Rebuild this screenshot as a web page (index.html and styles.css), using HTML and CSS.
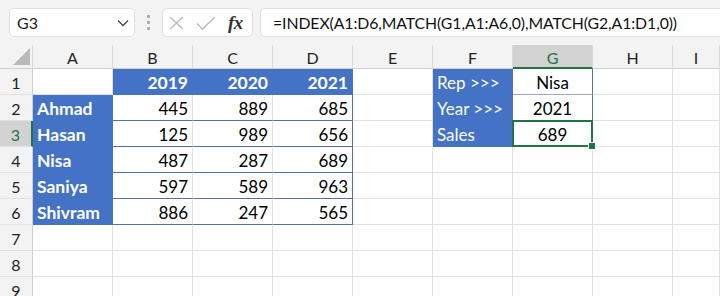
FILE: index.html
```html
<!DOCTYPE html>
<html>
<head>
<meta charset="utf-8">
<link rel="stylesheet" href="styles.css">
</head>
<body>
<div class="toolbar">
  <div class="namebox">
    <span class="ref">G3</span>
    <svg class="chev" width="12" height="8" viewBox="0 0 12 8"><path d="M1 1.5 L6 6.5 L11 1.5" fill="none" stroke="#444" stroke-width="1.3"/></svg>
  </div>
  <div class="dots"><i></i><i></i><i></i></div>
  <div class="fxbox">
    <svg width="18" height="14" viewBox="0 0 18 14"><path d="M2 1 L15 13 M15 1 L2 13" fill="none" stroke="#b9b9b9" stroke-width="1.3"/></svg>
    <svg width="20" height="14" viewBox="0 0 20 14"><path d="M1 7.5 L6.5 13 L19 1" fill="none" stroke="#b9b9b9" stroke-width="1.3"/></svg>
    <span class="fx">fx</span>
  </div>
  <div class="formula">=INDEX(A1:D6,MATCH(G1,A1:A6,0),MATCH(G2,A1:D1,0))</div>
</div>
<div class="sheet">
  <div class="corner"><span class="tri"></span></div>
  <div class="hdr">A</div><div class="hdr">B</div><div class="hdr">C</div><div class="hdr">D</div><div class="hdr">E</div><div class="hdr">F</div><div class="hdr hsel">G</div><div class="hdr">H</div><div class="hdr">I</div>

  <div class="rh">1</div>
  <div class="c"></div><div class="c blue bold num">2019</div><div class="c blue bold num">2020</div><div class="c blue bold num">2021</div><div class="c"></div><div class="c blue">Rep &gt;&gt;&gt;</div><div class="c ctr gb">Nisa</div><div class="c"></div><div class="c"></div>

  <div class="rh">2</div>
  <div class="c blue bold">Ahmad</div><div class="c num tb">445</div><div class="c num tb">889</div><div class="c num tb tr">685</div><div class="c"></div><div class="c blue">Year &gt;&gt;&gt;</div><div class="c ctr gb">2021</div><div class="c"></div><div class="c"></div>

  <div class="rh rsel">3</div>
  <div class="c blue bold">Hasan</div><div class="c num tb">125</div><div class="c num tb">989</div><div class="c num tb tr">656</div><div class="c"></div><div class="c blue">Sales</div><div class="c ctr sel">689</div><div class="c"></div><div class="c"></div>

  <div class="rh">4</div>
  <div class="c blue bold">Nisa</div><div class="c num tb">487</div><div class="c num tb">287</div><div class="c num tb tr">689</div><div class="c"></div><div class="c"></div><div class="c"></div><div class="c"></div><div class="c"></div>

  <div class="rh">5</div>
  <div class="c blue bold">Saniya</div><div class="c num tb">597</div><div class="c num tb">589</div><div class="c num tb tr">963</div><div class="c"></div><div class="c"></div><div class="c"></div><div class="c"></div><div class="c"></div>

  <div class="rh">6</div>
  <div class="c blue bold tbb">Shivram</div><div class="c num tb">886</div><div class="c num tb">247</div><div class="c num tb tr">565</div><div class="c"></div><div class="c"></div><div class="c"></div><div class="c"></div><div class="c"></div>

  <div class="rh">7</div>
  <div class="c"></div><div class="c"></div><div class="c"></div><div class="c"></div><div class="c"></div><div class="c"></div><div class="c"></div><div class="c"></div><div class="c"></div>

  <div class="rh">8</div>
  <div class="c"></div><div class="c"></div><div class="c"></div><div class="c"></div><div class="c"></div><div class="c"></div><div class="c"></div><div class="c"></div><div class="c"></div>

  <div class="rh">9</div>
  <div class="c"></div><div class="c"></div><div class="c"></div><div class="c"></div><div class="c"></div><div class="c"></div><div class="c"></div><div class="c"></div><div class="c"></div>
</div>
</body>
</html>
```
FILE: styles.css
```css
html, body {
  margin: 0;
  padding: 0;
  background: #ffffff;
  overflow: hidden;
}
body {
  width: 720px;
  height: 296px;
  font-family: Lato, "Noto Sans", sans-serif;
  color: #000;
}
.toolbar {
  height: 45px;
  box-sizing: border-box;
  background: #f3f3f3;
  display: flex;
  align-items: flex-start;
  padding: 8px 0 0 9px;
}
.namebox {
  width: 126px;
  height: 29px;
  box-sizing: border-box;
  background: #fff;
  border: 1px solid #e1e1e1;
  border-radius: 5px;
  display: flex;
  align-items: center;
  justify-content: space-between;
  padding: 0 5px 0 7px;
  font-size: 16px;
  color: #222;
}
.chev { margin-top: 1px; }
.dots {
  width: 27px;
  height: 29px;
  display: flex;
  flex-direction: column;
  align-items: center;
  justify-content: center;
  gap: 3px;
}
.dots i {
  display: block;
  width: 3px;
  height: 3px;
  background: #a8a8a8;
  border-radius: 1px;
}
.fxbox {
  width: 91px;
  height: 29px;
  box-sizing: border-box;
  background: #fff;
  border: 1px solid #e1e1e1;
  border-radius: 5px;
  display: flex;
  align-items: center;
  padding: 0 0 0 5px;
  gap: 10px;
}
.fx {
  font-family: "Liberation Serif", "DejaVu Serif", serif;
  font-style: italic;
  font-weight: bold;
  font-size: 19px;
  color: #333;
  margin-left: 2px;
  letter-spacing: -0.5px;
}
.formula {
  margin-left: 7px;
  flex: 1;
  height: 29px;
  box-sizing: border-box;
  background: #fff;
  border: 1px solid #e1e1e1;
  border-right: none;
  border-radius: 5px 0 0 5px;
  display: flex;
  align-items: center;
  padding: 0 0 0 12px;
  font-size: 15.8px;
  letter-spacing: -0.08px;
  color: #111;
  white-space: nowrap;
}
.sheet {
  display: grid;
  grid-template-columns: 33px repeat(8, 80px) 1fr;
  grid-template-rows: 24px repeat(9, 26px);
  font-size: 17px;
}
.sheet > div {
  box-sizing: border-box;
  border-right: 1px solid #e1e1e1;
  border-bottom: 1px solid #e1e1e1;
  display: flex;
  align-items: center;
  white-space: nowrap;
  overflow: visible;
}
.corner {
  background: #f3f3f3;
  position: relative;
}
.sheet > .corner, .sheet > .hdr { border-bottom-color: #cfcfcf; border-right-color: #d9d9d9; }
.tri {
  position: absolute;
  right: 2px;
  bottom: 3px;
  width: 0;
  height: 0;
  border-left: 17px solid transparent;
  border-bottom: 17px solid #b9b9b9;
}
.hdr {
  background: #f3f3f3;
  justify-content: center;
  font-size: 16px;
  color: #222;
  padding-top: 1px;
}
.sheet > .hsel {
  background: #d2d2d2;
  color: #217346;
  border-bottom: 2px solid #217346;
  padding-top: 2px;
}
.rh {
  background: #f3f3f3;
  justify-content: center;
  font-size: 16px;
  color: #222;
  padding-top: 1px;
}
.sheet > .rh { border-right-color: #cfcfcf; }
.sheet > .rsel {
  background: #d2d2d2;
  color: #2f6b4a;
  border-right: 2px solid #217346;
}
.c {
  padding: 1px 4px 0 4px;
}
.sheet > .blue {
  background: #4472c4;
  color: #fff;
  border-color: #4472c4;
}
.bold { font-weight: bold; font-size: 17.5px; }
.num { justify-content: flex-end; }
.ctr { justify-content: center; }
.sheet > .tb { border-bottom-color: #55729c; }
.sheet > .tr { border-right-color: #55729c; }
.sheet > .tbb { border-bottom-color: #55729c; }
.sheet > .gb {
  border-right-color: #55729c;
  border-bottom-color: #9aa9c0;
  box-shadow: -1px 0 0 #55729c;
}
.sel {
  position: relative;
}
.sel::after {
  content: "";
  position: absolute;
  left: -1px;
  top: -1px;
  right: -1px;
  bottom: -1px;
  border: 2px solid #217346;
}
.sel::before {
  content: "";
  position: absolute;
  right: -4px;
  bottom: -4px;
  width: 6px;
  height: 6px;
  background: #217346;
  border: 1px solid #fff;
  z-index: 2;
}
```
